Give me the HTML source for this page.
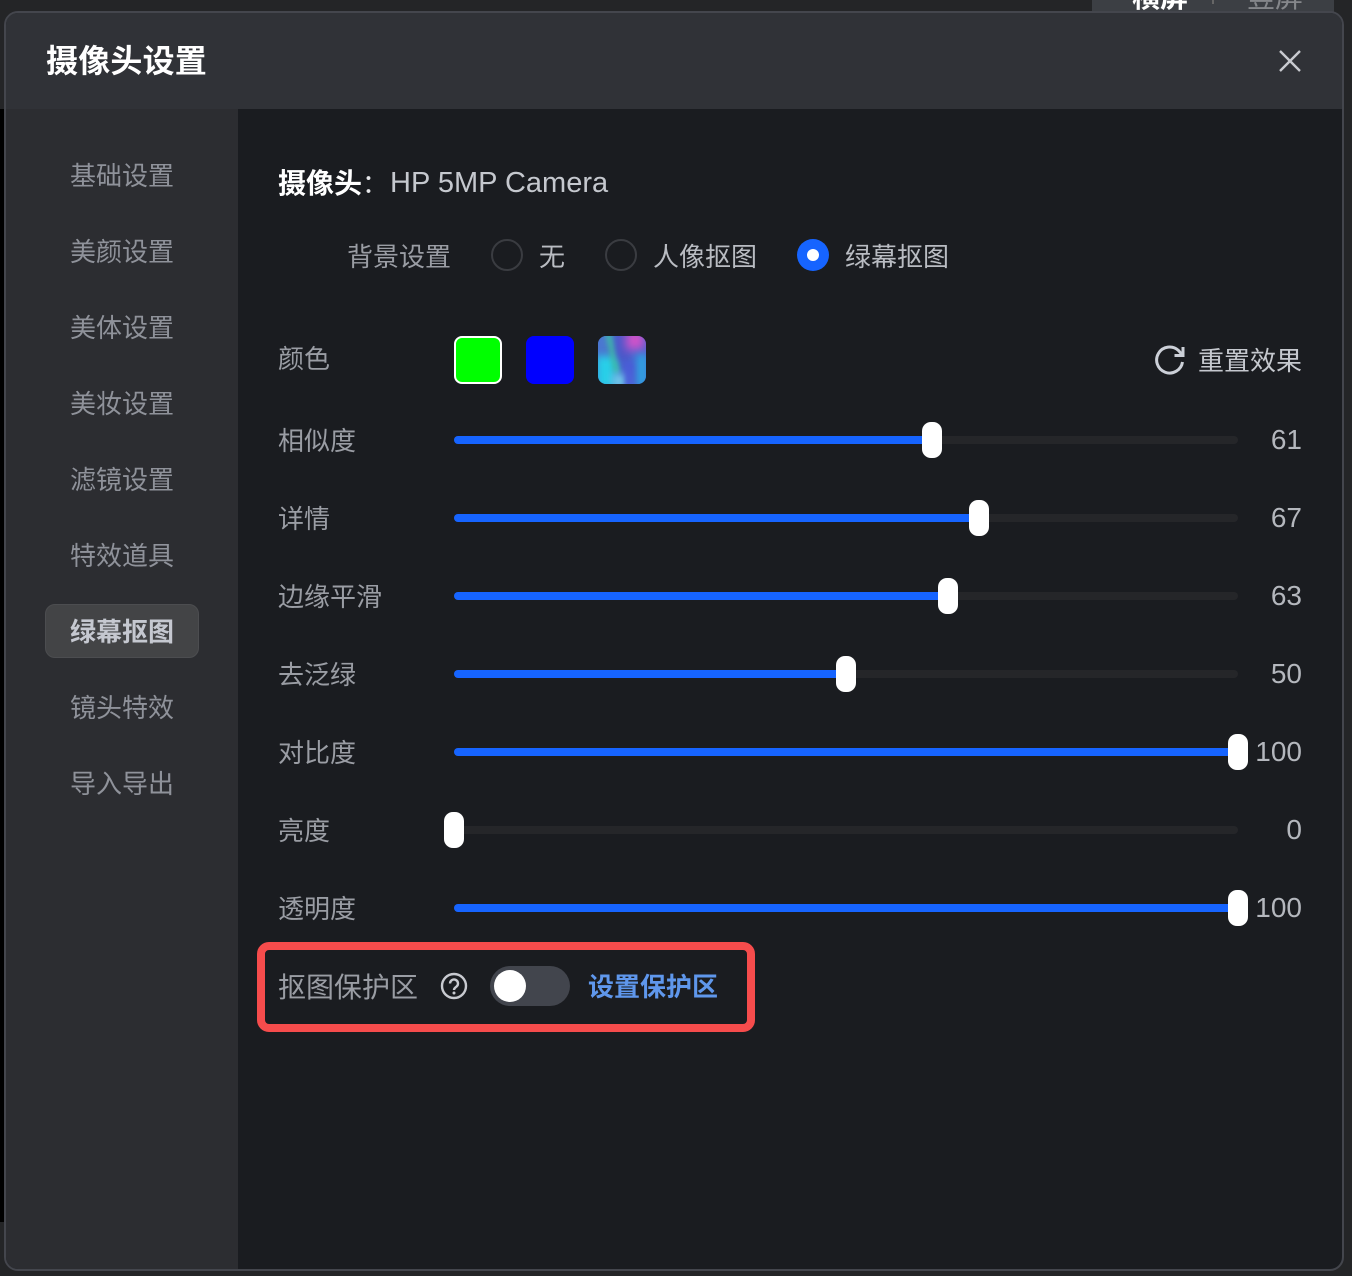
<!DOCTYPE html>
<html lang="zh"><head><meta charset="utf-8"><title>摄像头设置</title>
<style>
*{box-sizing:border-box;margin:0;padding:0}
html,body{width:1352px;height:1276px;overflow:hidden;background:#242527}
body{position:relative;font-family:"Liberation Sans","Noto Sans CJK SC",sans-serif;color:#c5c8ce}
.a{position:absolute;white-space:nowrap;line-height:32px;height:32px}
.nav{left:70px;font-size:26px;letter-spacing:0;color:#8f929a;width:104px;margin-top:1px}
.lbl{left:278px;font-size:26px;color:#9a9da4;margin-top:1px}
.val{right:50px;font-size:28px;color:#b4b7bd;text-align:right;letter-spacing:0}
.track{position:absolute;left:454px;width:784px;height:8px;border-radius:4px;background:#252629}
.fill{position:absolute;left:454px;height:8px;border-radius:4px;background:#1664ff}
.thumb{position:absolute;width:20px;height:36px;border-radius:9px;background:#fff}
.radio{position:absolute;width:32px;height:32px;border-radius:50%;border:2px solid #3a3c41;top:239px}
.rt{font-size:26px;color:#b9bcc2;top:241px}
.b{position:absolute}
</style></head><body>
<div style="position:absolute;left:0;top:109px;width:6px;height:1113px;background:#000"></div>
<div style="position:absolute;left:1092px;top:0;width:242px;height:14px;background:#3c3f44"></div>
<div class="a" style="left:1132px;top:-18px;font-size:28px;font-weight:700;color:#fff">横屏</div>
<div style="position:absolute;left:1212px;top:0;width:2px;height:4px;background:#666"></div>
<div class="a" style="left:1247px;top:-18px;font-size:28px;color:#85878b">竖屏</div>

<div style="position:absolute;left:4px;top:11px;width:1340px;height:1260px;border:2px solid #44464d;border-radius:14px;overflow:hidden;background:#1a1c20">
  <div style="position:absolute;left:0;top:0;width:1336px;height:96px;background:#303237"></div>
  <div style="position:absolute;left:0;top:96px;width:232px;height:1170px;background:#2c2d31"></div>
</div>

<div class="a" style="left:46px;top:43px;height:36px;line-height:36px;font-size:32px;font-weight:700;color:#fff;letter-spacing:.2px">摄像头设置</div>
<svg style="position:absolute;left:1278px;top:49px" width="24" height="24" viewBox="0 0 24 24"><path d="M2 2L22 22M22 2L2 22" stroke="#c8cacf" stroke-width="2.4" fill="none"/></svg>

<div class="a nav" style="top:159px">基础设置</div>
<div class="a nav" style="top:235px">美颜设置</div>
<div class="a nav" style="top:311px">美体设置</div>
<div class="a nav" style="top:387px">美妆设置</div>
<div class="a nav" style="top:463px">滤镜设置</div>
<div class="a nav" style="top:539px">特效道具</div>
<div style="position:absolute;left:45px;top:604px;width:154px;height:54px;border-radius:10px;background:#434446;border:1px solid #4c4d50"></div>
<div class="a nav" style="top:615px;color:#c5c8d0;font-weight:700">绿幕抠图</div>
<div class="a nav" style="top:691px">镜头特效</div>
<div class="a nav" style="top:767px">导入导出</div>

<div class="a" style="left:278px;top:168px;font-size:28px;color:#e6e7ea"><span style="font-weight:700;color:#fff">摄像头</span><span style="font-size:26px">：</span></div>
<div class="a" style="left:390px;top:167px;font-size:29px;color:#c5c8ce">HP 5MP Camera</div>

<div class="a lbl" style="left:347px;top:240px">背景设置</div>
<div class="radio" style="left:491px"></div>
<div class="a rt" style="left:539px">无</div>
<div class="radio" style="left:605px"></div>
<div class="a rt" style="left:653px">人像抠图</div>
<div class="radio" style="left:797px;background:#1664ff;border:0"></div>
<div style="position:absolute;left:807px;top:249px;width:12px;height:12px;border-radius:50%;background:#fff"></div>
<div class="a rt" style="left:845px">绿幕抠图</div>

<div class="a lbl" style="top:342px">颜色</div>
<div style="position:absolute;left:454px;top:336px;width:48px;height:48px;border-radius:8px;background:#00ff00;border:2px solid #fff"></div>
<div style="position:absolute;left:526px;top:336px;width:48px;height:48px;border-radius:8px;background:#0000ff"></div>
<div style="position:absolute;left:598px;top:336px;width:48px;height:48px;border-radius:8px;overflow:hidden;background:#4a62d0">
  <div class="b" style="left:-4px;top:-4px;width:16px;height:30px;background:#4a78d0;filter:blur(4px)"></div>
  <div class="b" style="left:-2px;top:20px;width:20px;height:32px;background:#28cfe8;filter:blur(4px)"></div>
  <div class="b" style="left:12px;top:-6px;width:5px;height:44px;background:#3cc8a0;filter:blur(3px);transform:rotate(-12deg)"></div>
  <div class="b" style="left:14px;top:38px;width:16px;height:14px;background:#70c8e8;filter:blur(4px)"></div>
  <div class="b" style="left:20px;top:-6px;width:10px;height:30px;background:#4a55c8;filter:blur(4px)"></div>
  <div class="b" style="left:28px;top:-6px;width:18px;height:20px;background:#d552c8;filter:blur(5px)"></div>
  <div class="b" style="left:38px;top:18px;width:12px;height:34px;background:#30a0e0;filter:blur(4px)"></div>
  <div class="b" style="left:27px;top:26px;width:8px;height:26px;background:#4a5cd8;filter:blur(3px)"></div>
</div>
<svg style="position:absolute;left:1154px;top:344px" width="32" height="32" viewBox="0 0 32 32" fill="none" stroke="#ccd0d8" stroke-width="3"><path d="M28.5 18a13 13 0 1 1-4-11.500L28.500 11"/><path d="M29 3v8.500h-8.500" stroke-width="3"/></svg>
<div class="a" style="left:1198px;top:345px;font-size:26px;color:#c5c8ce">重置效果</div>

<div class="a lbl" style="top:424px">相似度</div>
<div class="track" style="top:436px"></div><div class="fill" style="top:436px;width:478px"></div><div class="thumb" style="left:922px;top:422px"></div>
<div class="a val" style="top:424px">61</div>

<div class="a lbl" style="top:502px">详情</div>
<div class="track" style="top:514px"></div><div class="fill" style="top:514px;width:525px"></div><div class="thumb" style="left:969px;top:500px"></div>
<div class="a val" style="top:502px">67</div>

<div class="a lbl" style="top:580px">边缘平滑</div>
<div class="track" style="top:592px"></div><div class="fill" style="top:592px;width:494px"></div><div class="thumb" style="left:938px;top:578px"></div>
<div class="a val" style="top:580px">63</div>

<div class="a lbl" style="top:658px">去泛绿</div>
<div class="track" style="top:670px"></div><div class="fill" style="top:670px;width:392px"></div><div class="thumb" style="left:836px;top:656px"></div>
<div class="a val" style="top:658px">50</div>

<div class="a lbl" style="top:736px">对比度</div>
<div class="track" style="top:748px"></div><div class="fill" style="top:748px;width:784px"></div><div class="thumb" style="left:1228px;top:734px"></div>
<div class="a val" style="top:736px">100</div>

<div class="a lbl" style="top:814px">亮度</div>
<div class="track" style="top:826px"></div><div class="thumb" style="left:444px;top:812px"></div>
<div class="a val" style="top:814px">0</div>

<div class="a lbl" style="top:892px">透明度</div>
<div class="track" style="top:904px"></div><div class="fill" style="top:904px;width:784px"></div><div class="thumb" style="left:1228px;top:890px"></div>
<div class="a val" style="top:892px">100</div>

<div style="position:absolute;left:257px;top:942px;width:498px;height:90px;border:8px solid #f64c4c;border-radius:12px"></div>
<div class="a lbl" style="top:971px;font-size:28px">抠图保护区</div>
<svg style="position:absolute;left:440px;top:972px" width="28" height="28" viewBox="0 0 28 28" fill="none"><circle cx="14" cy="14" r="12" stroke="#c8cad0" stroke-width="2.400"/><path d="M10 11.500a4 4 0 1 1 6.500 3.100c-1.500 1.100-2.500 1.700-2.500 3.400" stroke="#c8cad0" stroke-width="2.400"/><circle cx="14" cy="21" r="1.500" fill="#c8cad0"/></svg>
<div style="position:absolute;left:490px;top:966px;width:80px;height:40px;border-radius:20px;background:#42454d"></div>
<div style="position:absolute;left:494px;top:970px;width:32px;height:32px;border-radius:50%;background:#fff"></div>
<div class="a" style="left:588px;top:971px;font-size:26px;font-weight:700;color:#5f97ec">设置保护区</div>
</body></html>
